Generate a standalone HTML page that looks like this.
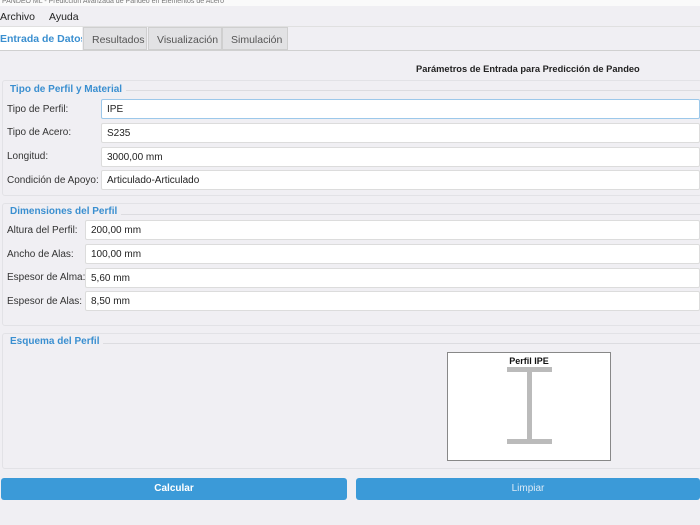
<!DOCTYPE html><html><head><meta charset="utf-8"><style>
body{margin:0;width:700px;height:525px;overflow:hidden;background:#f0eff3;font-family:"Liberation Sans",sans-serif;font-size:10px;color:#222;position:relative}
div,span{position:absolute;box-sizing:border-box}
.inp{background:#fff;border:1px solid #dcdcdc;border-radius:2px;height:20px;right:0;padding:4px 5px;font-size:10px}
.lab{font-size:10px;color:#333}
.grp{left:2px;right:-2px;border:1px solid #e2e2e6;border-radius:3px;background:#f0eff3}
.hd{color:#3a8fd0;font-weight:bold;font-size:10px;background:#f0eff3;padding:0 4px}
.ln{height:1px;background:#dcdce0;right:0}
.tab{top:27px;height:23px;background:#e2e2e4;border:1px solid #cfcfcf;color:#555;font-size:10.5px;padding:5px 8px}
.btn{top:478px;height:22px;background:#3b9ad8;border-radius:3px;color:#fff;font-weight:bold;text-align:center;line-height:22px;font-size:10px}
</style></head><body>
<div style="left:0;top:0;width:700px;height:6px;background:#fafafa;font-size:7px;color:#777;line-height:4px;overflow:hidden">&nbsp;PANDEO ML - Predicción Avanzada de Pandeo en Elementos de Acero</div>
<div style="left:0;top:11px;font-size:10.5px">Archivo</div>
<div style="left:49px;top:11px;font-size:10.5px">Ayuda</div>
<div style="left:0;top:26px;width:700px;height:1px;background:#e0e0e0"></div>
<div style="left:0;top:27px;width:82px;height:24px;background:#fff;color:#3a8fd0;font-weight:bold;font-size:10.5px;padding:6px 0 0 0;white-space:nowrap;overflow:hidden">Entrada de Datos</div>
<div class="tab" style="left:83px;width:64px;padding-top:6px">Resultados</div>
<div class="tab" style="left:148px;width:74px;padding-top:6px">Visualización</div>
<div class="tab" style="left:222px;width:66px;padding-top:6px">Simulación</div>
<div style="left:0;top:50px;width:700px;height:1px;background:#d0d0d0"></div>
<div style="left:416px;top:64px;font-weight:bold;font-size:9.3px">Parámetros de Entrada para Predicción de Pandeo</div>

<div class="grp" style="top:80px;height:116px"></div>
<div class="ln" style="left:10px;top:90px"></div>
<div class="hd" style="left:6px;top:84px">Tipo de Perfil y Material</div>
<div class="lab" style="left:7px;top:104px">Tipo de Perfil:</div><div class="inp" style="left:101px;top:99px;border-color:#9cc8ea">IPE</div>
<div class="lab" style="left:7px;top:127px">Tipo de Acero:</div><div class="inp" style="left:101px;top:123px">S235</div>
<div class="lab" style="left:7px;top:151px">Longitud:</div><div class="inp" style="left:101px;top:147px">3000,00 mm</div>
<div class="lab" style="left:7px;top:175px">Condición de Apoyo:</div><div class="inp" style="left:101px;top:170px">Articulado-Articulado</div>

<div class="grp" style="top:203px;height:123px"></div>
<div class="ln" style="left:10px;top:214px"></div>
<div class="hd" style="left:6px;top:206px">Dimensiones del Perfil</div>
<div class="lab" style="left:7px;top:225px">Altura del Perfil:</div><div class="inp" style="left:85px;top:220px">200,00 mm</div>
<div class="lab" style="left:7px;top:249px">Ancho de Alas:</div><div class="inp" style="left:85px;top:244px">100,00 mm</div>
<div class="lab" style="left:7px;top:272px">Espesor de Alma:</div><div class="inp" style="left:85px;top:268px">5,60 mm</div>
<div class="lab" style="left:7px;top:296px">Espesor de Alas:</div><div class="inp" style="left:85px;top:291px">8,50 mm</div>

<div class="grp" style="top:333px;height:136px"></div>
<div class="ln" style="left:10px;top:343px"></div>
<div class="hd" style="left:6px;top:336px">Esquema del Perfil</div>
<div style="left:447px;top:352px;width:164px;height:109px;background:#fff;border:1px solid #888">
<div style="left:0;right:0;top:3px;text-align:center;font-weight:bold;font-size:9px;color:#111">Perfil IPE</div>
<div style="left:59px;top:14px;width:45px;height:5px;background:#bbb"></div>
<div style="left:79px;top:17px;width:5px;height:72px;background:#bbb"></div>
<div style="left:59px;top:86px;width:45px;height:5px;background:#bbb"></div>
</div>

<div class="btn" style="left:1px;width:346px">Calcular</div>
<div class="btn" style="left:356px;width:344px;font-weight:normal;color:#dbeaf6">Limpiar</div>
</body></html>
